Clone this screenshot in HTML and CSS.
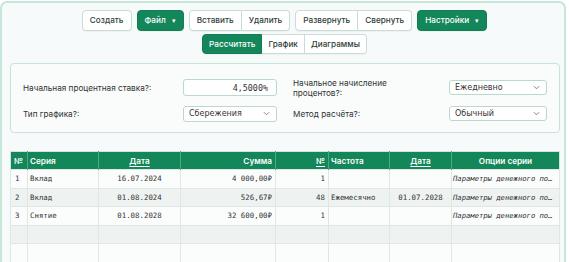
FILE: index.html
```html
<!DOCTYPE html>
<html lang="ru">
<head>
<meta charset="utf-8">
<title>Калькулятор</title>
<link rel="stylesheet" href="styles.css">
</head>
<body>
<div class="frame">
  <div class="toolbar">
    <button class="btn">Создать</button>
    <button class="btn primary">Файл <span class="caret">▾</span></button>
    <div class="group">
      <button class="btn">Вставить</button>
      <button class="btn">Удалить</button>
    </div>
    <div class="group">
      <button class="btn">Развернуть</button>
      <button class="btn">Свернуть</button>
    </div>
    <button class="btn primary">Настройки <span class="caret">▾</span></button>
  </div>
  <div class="toolbar second">
    <div class="group">
      <button class="btn primary">Рассчитать</button>
      <button class="btn">График</button>
      <button class="btn">Диаграммы</button>
    </div>
  </div>

  <div class="panel">
    <div class="field">
      <span class="label">Начальная процентная ставка?:</span>
      <div class="input">4,5000%</div>
    </div>
    <div class="field">
      <span class="label">Начальное начисление<br>процентов?:</span>
      <div class="select wide">Ежедневно<svg class="chev" viewBox="0 0 8 5"><path d="M1 1l3 3 3-3" fill="none" stroke="#777" stroke-width="1"/></svg></div>
    </div>
    <div class="field">
      <span class="label">Тип графика?:</span>
      <div class="select">Сбережения<svg class="chev" viewBox="0 0 8 5"><path d="M1 1l3 3 3-3" fill="none" stroke="#777" stroke-width="1"/></svg></div>
    </div>
    <div class="field">
      <span class="label">Метод расчёта?:</span>
      <div class="select wide">Обычный<svg class="chev" viewBox="0 0 8 5"><path d="M1 1l3 3 3-3" fill="none" stroke="#777" stroke-width="1"/></svg></div>
    </div>
  </div>

  <table class="grid">
    <colgroup>
      <col class="c-num"><col class="c-ser"><col class="c-date"><col class="c-sum">
      <col class="c-cnt"><col class="c-freq"><col class="c-date2"><col class="c-opt">
    </colgroup>
    <thead>
      <tr>
        <th class="l">№</th>
        <th class="l">Серия</th>
        <th class="c"><u>Дата</u></th>
        <th class="r">Сумма</th>
        <th class="r"><u>№</u></th>
        <th class="l">Частота</th>
        <th class="c"><u>Дата</u></th>
        <th class="c">Опции серии</th>
      </tr>
    </thead>
    <tbody>
      <tr>
        <td class="l">1</td><td class="l">Вклад</td><td class="c">16.07.2024</td><td class="r">4 000,00₽</td>
        <td class="r">1</td><td class="l"></td><td class="c"></td><td class="opt">Параметры денежного по…</td>
      </tr>
      <tr>
        <td class="l">2</td><td class="l">Вклад</td><td class="c">01.08.2024</td><td class="r">526,67₽</td>
        <td class="r">48</td><td class="l">Ежемесячно</td><td class="c">01.07.2028</td><td class="opt">Параметры денежного по…</td>
      </tr>
      <tr>
        <td class="l">3</td><td class="l">Снятие</td><td class="c">01.08.2028</td><td class="r">32 600,00₽</td>
        <td class="r">1</td><td class="l"></td><td class="c"></td><td class="opt">Параметры денежного по…</td>
      </tr>
      <tr>
        <td></td><td></td><td></td><td></td><td></td><td></td><td></td><td></td>
      </tr>
      <tr>
        <td></td><td></td><td></td><td></td><td></td><td></td><td></td><td></td>
      </tr>
    </tbody>
  </table>
</div>
</body>
</html>
```

FILE: styles.css
```css
* { box-sizing: border-box; }

html, body {
  margin: 0;
  padding: 0;
  background: #ffffff;
  overflow: hidden;
}

body {
  font-family: Inter, "Noto Sans", sans-serif;
  color: #2b2f2e;
}

.frame {
  margin: 1px 4px 0 0;
  height: 270px;
  border: 2px solid #c6e6da;
  border-bottom: none;
  border-radius: 7px 7px 0 0;
  background: #f7fafa;
  padding: 7px 5px 0 8px;
}

.toolbar {
  display: flex;
  justify-content: center;
  gap: 5px;
}

.toolbar.second {
  margin-top: 3px;
}

.group {
  display: flex;
}

.btn {
  font-family: Inter, "Noto Sans", sans-serif;
  font-size: 8.2px;
  font-weight: 500;
  color: #2f3d38;
  background: #ffffff;
  border: 1px solid #c9ddd6;
  border-radius: 4px;
  height: 21px;
  padding: 0 7px;
  margin: 0;
  line-height: 1;
  display: flex;
  align-items: center;
  gap: 6px;
  box-shadow: 0 1px 1px rgba(0, 0, 0, 0.04);
}

.toolbar.second .btn {
  height: 20px;
  padding: 0 6px;
}

.btn.primary {
  background: #13865a;
  border-color: #127e55;
  color: #ffffff;
}

.caret {
  font-size: 7px;
  line-height: 1;
}

.group .btn {
  border-radius: 0;
}

.group .btn + .btn {
  border-left: none;
}

.group .btn:first-child {
  border-radius: 4px 0 0 4px;
}

.group .btn:last-child {
  border-radius: 0 4px 4px 0;
}

.panel {
  margin-top: 9px;
  width: 550px;
  border: 1px solid #c6e4d8;
  border-radius: 4px;
  background: #fafcfc;
  padding: 13px 12px 10px;
  display: grid;
  grid-template-columns: 1fr 1fr;
  grid-template-rows: 21px 17px;
  column-gap: 16px;
  row-gap: 7px;
}

.field {
  display: flex;
  align-items: center;
  justify-content: space-between;
}

.label {
  font-size: 8.2px;
  line-height: 10px;
  color: #2e3432;
}

.input,
.select {
  height: 16px;
  background: #ffffff;
  border: 1px solid #b9d9cd;
  border-radius: 3px;
  display: flex;
  align-items: center;
  font-size: 8.3px;
  color: #333;
}

.input {
  width: 94px;
  height: 17px;
  justify-content: flex-end;
  padding-right: 8px;
  font-family: "DejaVu Sans Mono", "Liberation Mono", monospace;
  font-size: 8.4px;
}

.select {
  width: 94px;
  justify-content: space-between;
  padding: 0 6px 0 5px;
  font-family: "DejaVu Sans", Inter, sans-serif;
  font-weight: 500;
  font-size: 8px;
}

.select.wide {
  width: 98px;
  height: 15px;
}

.chev {
  width: 7px;
  height: 5px;
}

.grid {
  margin-top: 18px;
  width: 549px;
  border-collapse: collapse;
  table-layout: fixed;
  border: 1px solid #d5e2de;
}

.c-num { width: 17px; }
.c-ser { width: 71px; }
.c-date { width: 82px; }
.c-sum { width: 95px; }
.c-cnt { width: 53px; }
.c-freq { width: 61px; }
.c-date2 { width: 62px; }
.c-opt { width: 108px; }

.grid th {
  height: 18px;
  background: #13865a;
  color: #ffffff;
  font-size: 8.2px;
  font-weight: 600;
  padding: 0 2px;
  border-left: 1px solid #4fa783;
  white-space: nowrap;
  overflow: hidden;
}

.grid th:first-child {
  border-left: none;
  padding-left: 3px;
}

.grid th u {
  text-decoration-thickness: 1px;
  text-underline-offset: 1.5px;
}

.grid td {
  height: 18.5px;
  font-family: "DejaVu Sans Mono", "Liberation Mono", monospace;
  font-size: 7.4px;
  color: #333;
  padding: 0 2px;
  border: 1px solid #dfe6e4;
  white-space: nowrap;
  overflow: hidden;
}

.grid td:first-child {
  padding-left: 4px;
}

.grid tbody tr:nth-child(odd) td {
  background: #fbfcfc;
}

.grid tbody tr:nth-child(even) td {
  background: #eef2f1;
}

.l { text-align: left; }
.c { text-align: center; }
.r { text-align: right; }

.grid td.r { padding-right: 3px; }
.grid th.r { padding-right: 3px; }

.grid td.opt {
  font-style: italic;
  font-size: 7.2px;
  padding-left: 1px;
  padding-right: 1px;
}
```
